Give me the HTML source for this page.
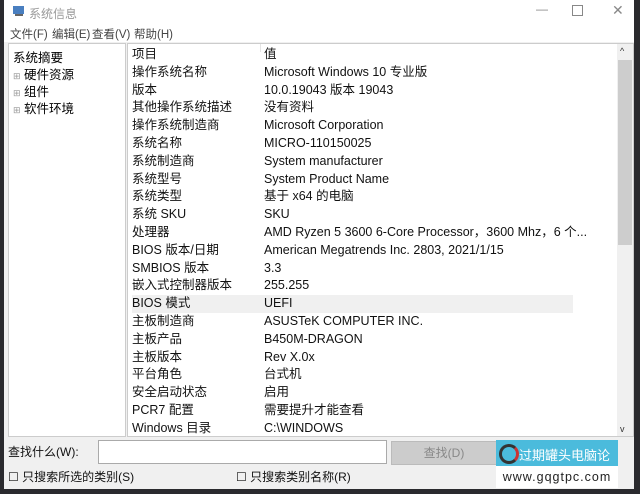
<!DOCTYPE html><html><head><style>
body{margin:0;width:640px;height:494px;background:#2a2a2e;font-family:"Liberation Sans","Noto Sans CJK SC",sans-serif;overflow:hidden;position:relative}
.win{position:absolute;left:4px;top:0;width:630px;height:489px;background:#f0f0f0}
.tb{position:absolute;left:0;top:0;width:630px;height:24px;background:#fff;font-size:12px;color:#999}
.menu{position:absolute;top:24px;left:0;width:630px;height:18px;background:#fff;font-size:11.5px;color:#444}
.menu span{position:absolute;top:2px}
.lp{position:absolute;left:4px;top:43px;width:116px;height:392px;background:#fff;border:1px solid #ccc;font-size:12.5px;color:#000}
.rp{position:absolute;left:123px;top:43px;width:505px;height:392px;background:#fff;border:1px solid #ccc;overflow:hidden}
.r{position:absolute;left:4px;height:17.8px;width:441px;font-size:12.5px;line-height:17.8px;color:#111}
.r b{font-weight:normal;position:absolute;left:0}
.r i{font-style:normal;position:absolute;left:132px;white-space:nowrap}
.sb{position:absolute;right:0;top:0;width:16px;height:392px;background:#f0f0f0}
</style></head><body><div class="win">
<div class="tb"><svg style="position:absolute;left:8px;top:5px" width="14" height="12"><rect x="1" y="1" width="11" height="8" fill="#4a7fc0"/><rect x="3" y="9" width="8" height="2" fill="#666"/></svg><span style="position:absolute;left:25px;top:5px">系统信息</span>
<span style="position:absolute;left:532px;top:2px;color:#888">—</span><span style="position:absolute;left:568px;top:5px;width:9px;height:9px;border:1px solid #888"></span><span style="position:absolute;left:608px;top:2px;font-size:14px;color:#888">✕</span></div>
<div class="menu"><span style="left:6px">文件(F)</span><span style="left:48px">编辑(E)</span><span style="left:88px">查看(V)</span><span style="left:130px">帮助(H)</span></div>
<div class="lp"><div style="position:absolute;left:4px;top:3px">系统摘要</div><div style="position:absolute;left:4px;top:20px"><span style="color:#999;font-size:9px">⊞</span> 硬件资源</div><div style="position:absolute;left:4px;top:37px"><span style="color:#999;font-size:9px">⊞</span> 组件</div><div style="position:absolute;left:4px;top:54px"><span style="color:#999;font-size:9px">⊞</span> 软件环境</div></div>
<div class="rp">
<div style="position:absolute;left:132px;top:0;width:1px;height:8px;background:#e5e5e5"></div>
<div class="r" style="top:2px"><b>项目</b><i>值</i></div>
<div class="r" style="top:19.8px"><b>操作系统名称</b><i>Microsoft Windows 10 专业版</i></div>
<div class="r" style="top:37.6px"><b>版本</b><i>10.0.19043 版本 19043</i></div>
<div class="r" style="top:55.4px"><b>其他操作系统描述</b><i>没有资料</i></div>
<div class="r" style="top:73.2px"><b>操作系统制造商</b><i>Microsoft Corporation</i></div>
<div class="r" style="top:91px"><b>系统名称</b><i>MICRO-110150025</i></div>
<div class="r" style="top:108.8px"><b>系统制造商</b><i>System manufacturer</i></div>
<div class="r" style="top:126.6px"><b>系统型号</b><i>System Product Name</i></div>
<div class="r" style="top:144.4px"><b>系统类型</b><i>基于 x64 的电脑</i></div>
<div class="r" style="top:162.2px"><b>系统 SKU</b><i>SKU</i></div>
<div class="r" style="top:180px"><b>处理器</b><i>AMD Ryzen 5 3600 6-Core Processor，3600 Mhz，6 个...</i></div>
<div class="r" style="top:197.8px"><b>BIOS 版本/日期</b><i>American Megatrends Inc. 2803, 2021/1/15</i></div>
<div class="r" style="top:215.6px"><b>SMBIOS 版本</b><i>3.3</i></div>
<div class="r" style="top:233.4px"><b>嵌入式控制器版本</b><i>255.255</i></div>
<div class="r" style="top:251.2px;background:#f0f0f0"><b>BIOS 模式</b><i>UEFI</i></div>
<div class="r" style="top:269px"><b>主板制造商</b><i>ASUSTeK COMPUTER INC.</i></div>
<div class="r" style="top:286.8px"><b>主板产品</b><i>B450M-DRAGON</i></div>
<div class="r" style="top:304.6px"><b>主板版本</b><i>Rev X.0x</i></div>
<div class="r" style="top:322.4px"><b>平台角色</b><i>台式机</i></div>
<div class="r" style="top:340.2px"><b>安全启动状态</b><i>启用</i></div>
<div class="r" style="top:358px"><b>PCR7 配置</b><i>需要提升才能查看</i></div>
<div class="r" style="top:375.8px"><b>Windows 目录</b><i>C:\WINDOWS</i></div>
<div class="sb"><div style="position:absolute;left:3px;top:2px;font-size:9px;color:#333">^</div><div style="position:absolute;left:1px;top:16px;width:14px;height:185px;background:#cdcdcd"></div><div style="position:absolute;left:3px;bottom:2px;font-size:9px;color:#333">v</div></div>
</div>
<div style="position:absolute;left:4px;top:443px;font-size:12px;color:#111">查找什么(W):</div>
<div style="position:absolute;left:94px;top:440px;width:287px;height:22px;background:#fff;border:1px solid #aaa"></div>
<div style="position:absolute;left:387px;top:441px;width:104px;height:22px;background:#ccc;border:1px solid #bbb;font-size:12px;color:#888;text-align:center;line-height:22px">查找(D)</div>
<div style="position:absolute;left:4px;top:468px;font-size:12px;color:#111">☐ 只搜索所选的类别(S)</div>
<div style="position:absolute;left:232px;top:468px;font-size:12px;color:#111">☐ 只搜索类别名称(R)</div>
<div style="position:absolute;left:492px;top:440px;width:122px;height:26px;background:#4bbbdc"><div style="position:absolute;left:3px;top:4px;width:14px;height:14px;border:3px solid #333;border-radius:50%;border-right-color:#c33"></div><span style="position:absolute;left:23px;top:5px;color:#fff;font-size:13px">过期罐头电脑论坛</span></div>
<div style="position:absolute;left:492px;top:466px;width:122px;height:22px;background:#fff;font-size:12.5px;letter-spacing:1px;text-align:center;line-height:22px;color:#222">www.gqgtpc.com</div>
</div></body></html>
